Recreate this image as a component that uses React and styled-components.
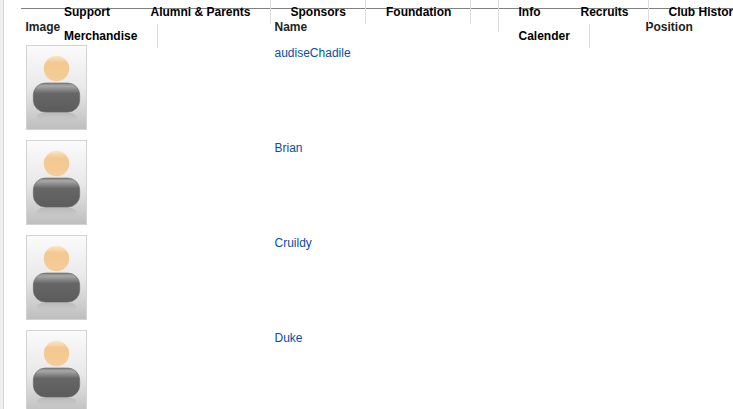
import React from "react";
import styled, { createGlobalStyle } from "styled-components";

const Global = createGlobalStyle`
  html, body { margin: 0; padding: 0; background: #fff; overflow: hidden; height: 409px; }
  body { font-family: "Liberation Sans", Arial, sans-serif; font-size: 12px; color: #000; }
`;

const Page = styled.div`
  position: relative;
  width: 733px;
  height: 409px;
  overflow: hidden;
  box-sizing: border-box;
  border-left: 3px solid #f0f0f0;
  background: #fff;
  &::before { content: ""; position: absolute; left: 0; top: 0; bottom: 0; width: 1px; background: #d8d8d8; }
`;

const Nav = styled.nav`
  position: absolute;
  left: 18px;
  top: 0;
  width: 712px;
  height: 48px;
  &::before { content: ""; position: absolute; left: 0; right: 0; top: 8px; height: 1px; background: #808080; }
`;

const NavItem = styled.span`
  position: absolute;
  left: ${(p) => p.$x}px;
  top: ${(p) => p.$y}px;
  font-weight: bold;
  font-size: 12px;
  line-height: 14px;
  color: #000;
  white-space: nowrap;
`;

const NavRule = styled.i`
  position: absolute;
  left: ${(p) => p.$x}px;
  top: ${(p) => p.$y}px;
  height: ${(p) => p.$h}px;
  width: 1px;
  background: #dcdcdc;
`;

const Table = styled.div`
  padding: 17px 0 0 22.5px;
  display: flex;
  flex-direction: column;
`;

const HeadRow = styled.div`
  display: grid;
  grid-template-columns: 249px 371px 1fr;
  height: 28px;
  font-weight: bold;
  color: #222;
  line-height: 20px;
`;

const Row = styled.div`
  display: grid;
  grid-template-columns: 249px 1fr;
  height: 95px;
`;

const Thumb = styled.svg`
  display: block;
  width: 61px;
  height: 85px;
  margin-left: 0.5px;
`;

const NameLink = styled.a`
  color: #0b4ea2;
  text-decoration: none;
  line-height: 14px;
  font-size: 12px;
  display: block;
  padding-top: 1px;
`;

const Avatar = ({ id }) => (
  <Thumb viewBox="0 0 61 85">
    <defs>
      <linearGradient id={`bg${id}`} x1="0" y1="0" x2="0" y2="1">
        <stop offset="0" stopColor="#fbfbfb" />
        <stop offset="0.5" stopColor="#e9e9e9" />
        <stop offset="1" stopColor="#bebebe" />
      </linearGradient>
      <linearGradient id={`head${id}`} x1="0" y1="0" x2="0" y2="1">
        <stop offset="0" stopColor="#fbe6c8" />
        <stop offset="0.28" stopColor="#f4c890" />
        <stop offset="1" stopColor="#f5cc98" />
      </linearGradient>
      <linearGradient id={`body${id}`} x1="0" y1="0" x2="0" y2="1">
        <stop offset="0" stopColor="#7c7c7c" />
        <stop offset="0.1" stopColor="#a8a8a8" />
        <stop offset="0.36" stopColor="#666" />
        <stop offset="1" stopColor="#5c5c5c" />
      </linearGradient>
      <linearGradient id={`ref${id}`} x1="0" y1="0" x2="0" y2="1">
        <stop offset="0" stopColor="#a4a4a4" stopOpacity="0.7" />
        <stop offset="1" stopColor="#c6c6c6" stopOpacity="0" />
      </linearGradient>
    </defs>
    <rect x="0.5" y="0.5" width="60" height="84" fill={`url(#bg${id})`} stroke="#d2d2d2" />
    <ellipse cx="30.5" cy="72" rx="20" ry="6" fill={`url(#ref${id})`} />
    <circle cx="30.5" cy="23.5" r="12.7" fill={`url(#head${id})`} />
    <rect x="7.3" y="38" width="46.4" height="29" rx="12" fill={`url(#body${id})`} stroke="#6a6a6a" strokeWidth="0.6" />
  </Thumb>
);

const navItems = [
  ["Support", 43, 5], ["Alumni & Parents", 129.5, 5], ["Sponsors", 269.5, 5], ["Foundation", 365, 5],
  ["Info", 497.5, 5], ["Recruits", 559.5, 5], ["Club History", 647.5, 5], ["Merchandise", 43, 29], ["Calender", 497.5, 29],
];
const navRules = [
  [249, 0, 24], [344, 0, 24], [449, 0, 24], [477, 0, 32], [627, 0, 24],
  [136, 24, 24], [568, 24, 24],
];
const people = ["audiseChadile", "Brian", "Cruildy", "Duke"];

export default function App() {
  return (
    <Page>
      <Global />
      <Table>
        <HeadRow>
          <span>Image</span>
          <span>Name</span>
          <span>Position</span>
        </HeadRow>
        {people.map((name, i) => (
          <Row key={name}>
            <Avatar id={i} />
            <NameLink href="#">{name}</NameLink>
          </Row>
        ))}
      </Table>
      <Nav>
        {navRules.map(([x, y, h]) => <NavRule key={`${x}-${y}`} $x={x} $y={y} $h={h} />)}
        {navItems.map(([t, x, y]) => <NavItem key={t} $x={x} $y={y}>{t}</NavItem>)}
      </Nav>
    </Page>
  );
}
